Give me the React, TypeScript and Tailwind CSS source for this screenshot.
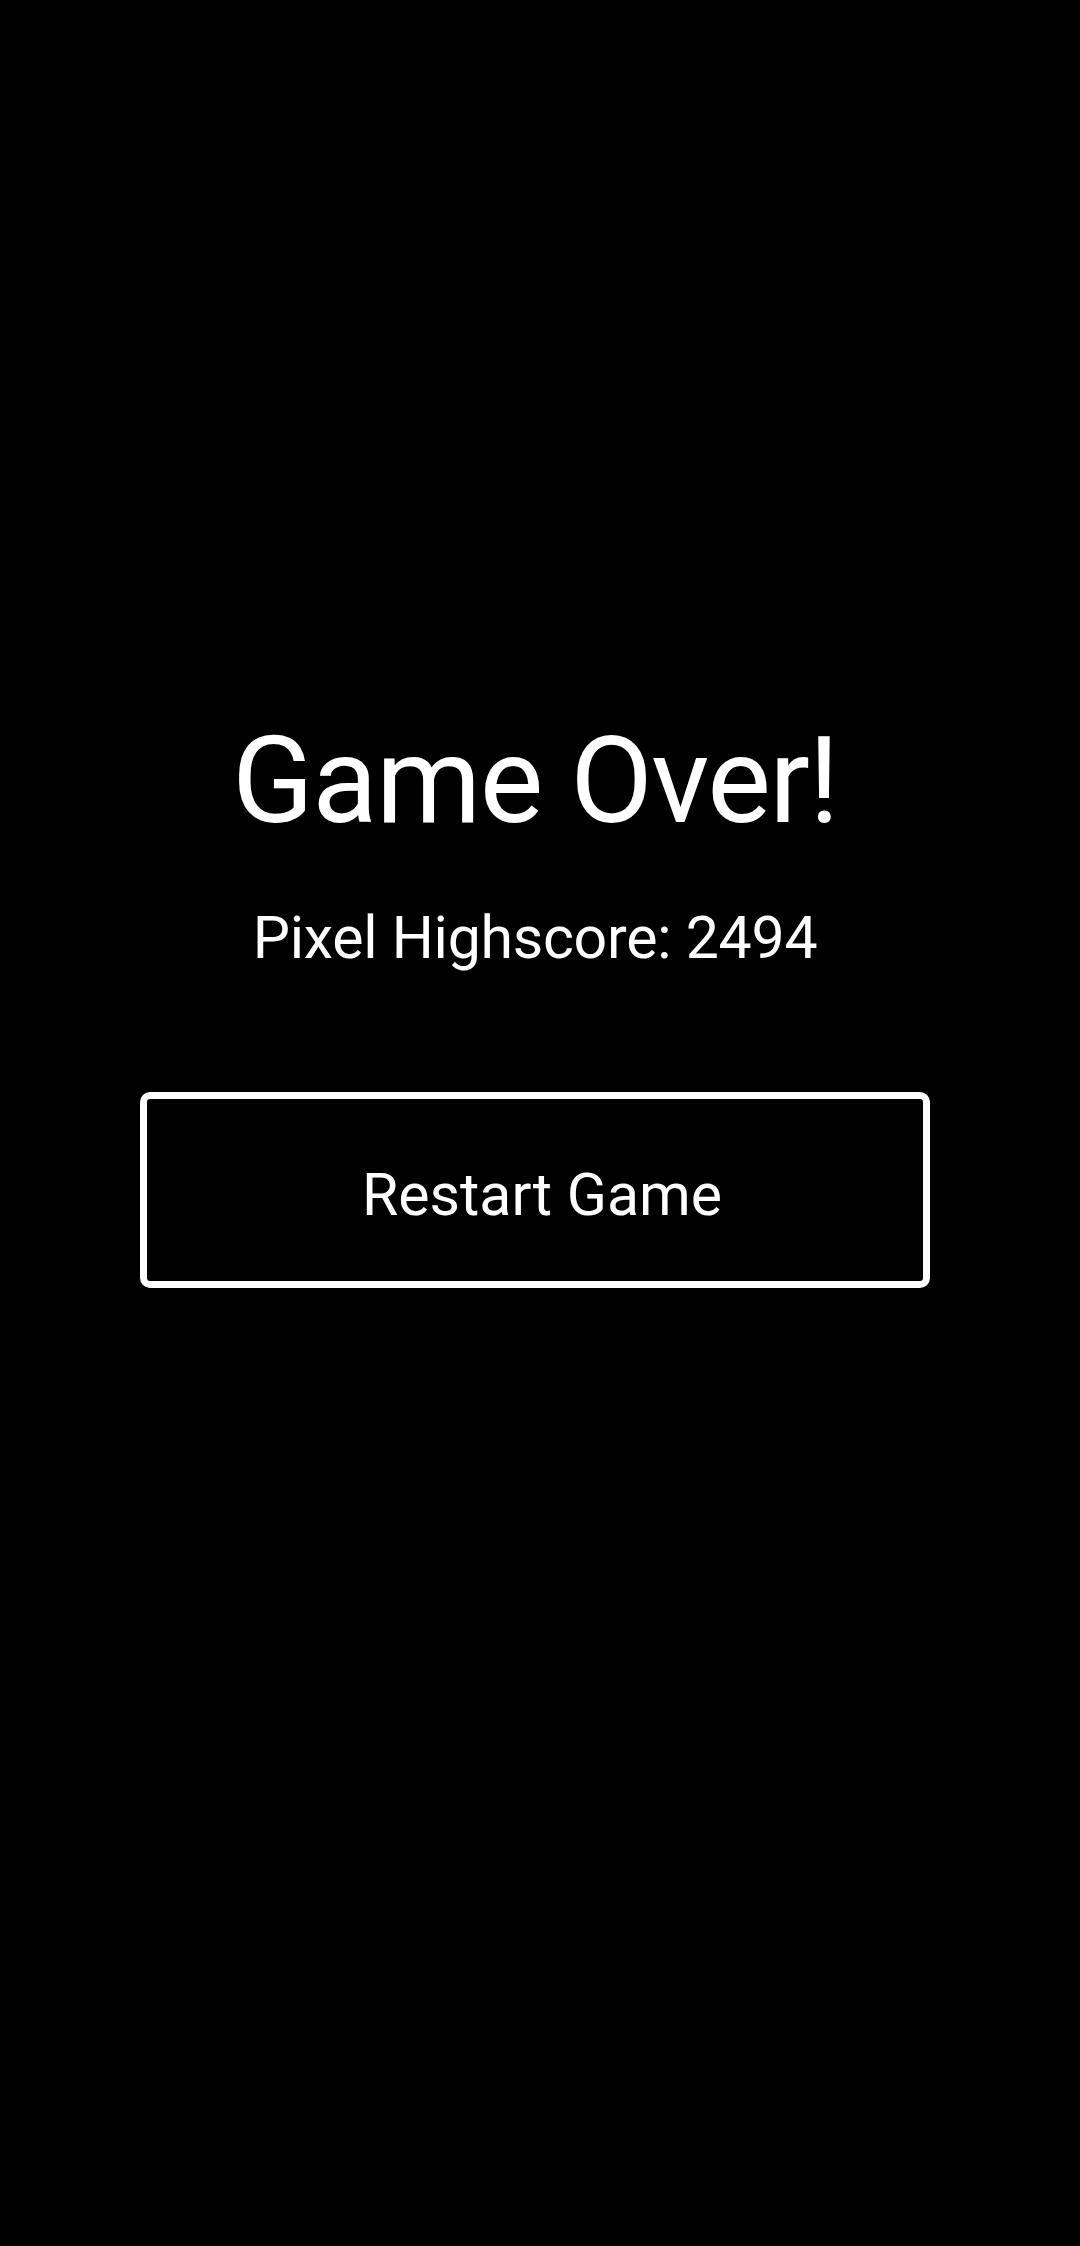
import React from 'react';

const App: React.FC = () => {
  return (
    <div className="min-h-[2246px] w-full bg-black text-white font-['Roboto',sans-serif]">
      <div className="flex flex-col items-center pt-[721px] pr-[10px]">
        <h1 className="text-[120px] leading-none font-normal tracking-[-1.5px]">Game Over!</h1>
        <p className="mt-[67px] text-[59px] leading-none tracking-[-0.25px]">Pixel Highscore: 2494</p>
        <button className="mt-[125px] flex h-[196px] w-[790px] items-center justify-center rounded-[10px] border-[7px] border-white bg-black pl-[14px] pt-[8px] text-[59px] leading-none text-white">
          Restart Game
        </button>
      </div>
    </div>
  );
};

export default App;
